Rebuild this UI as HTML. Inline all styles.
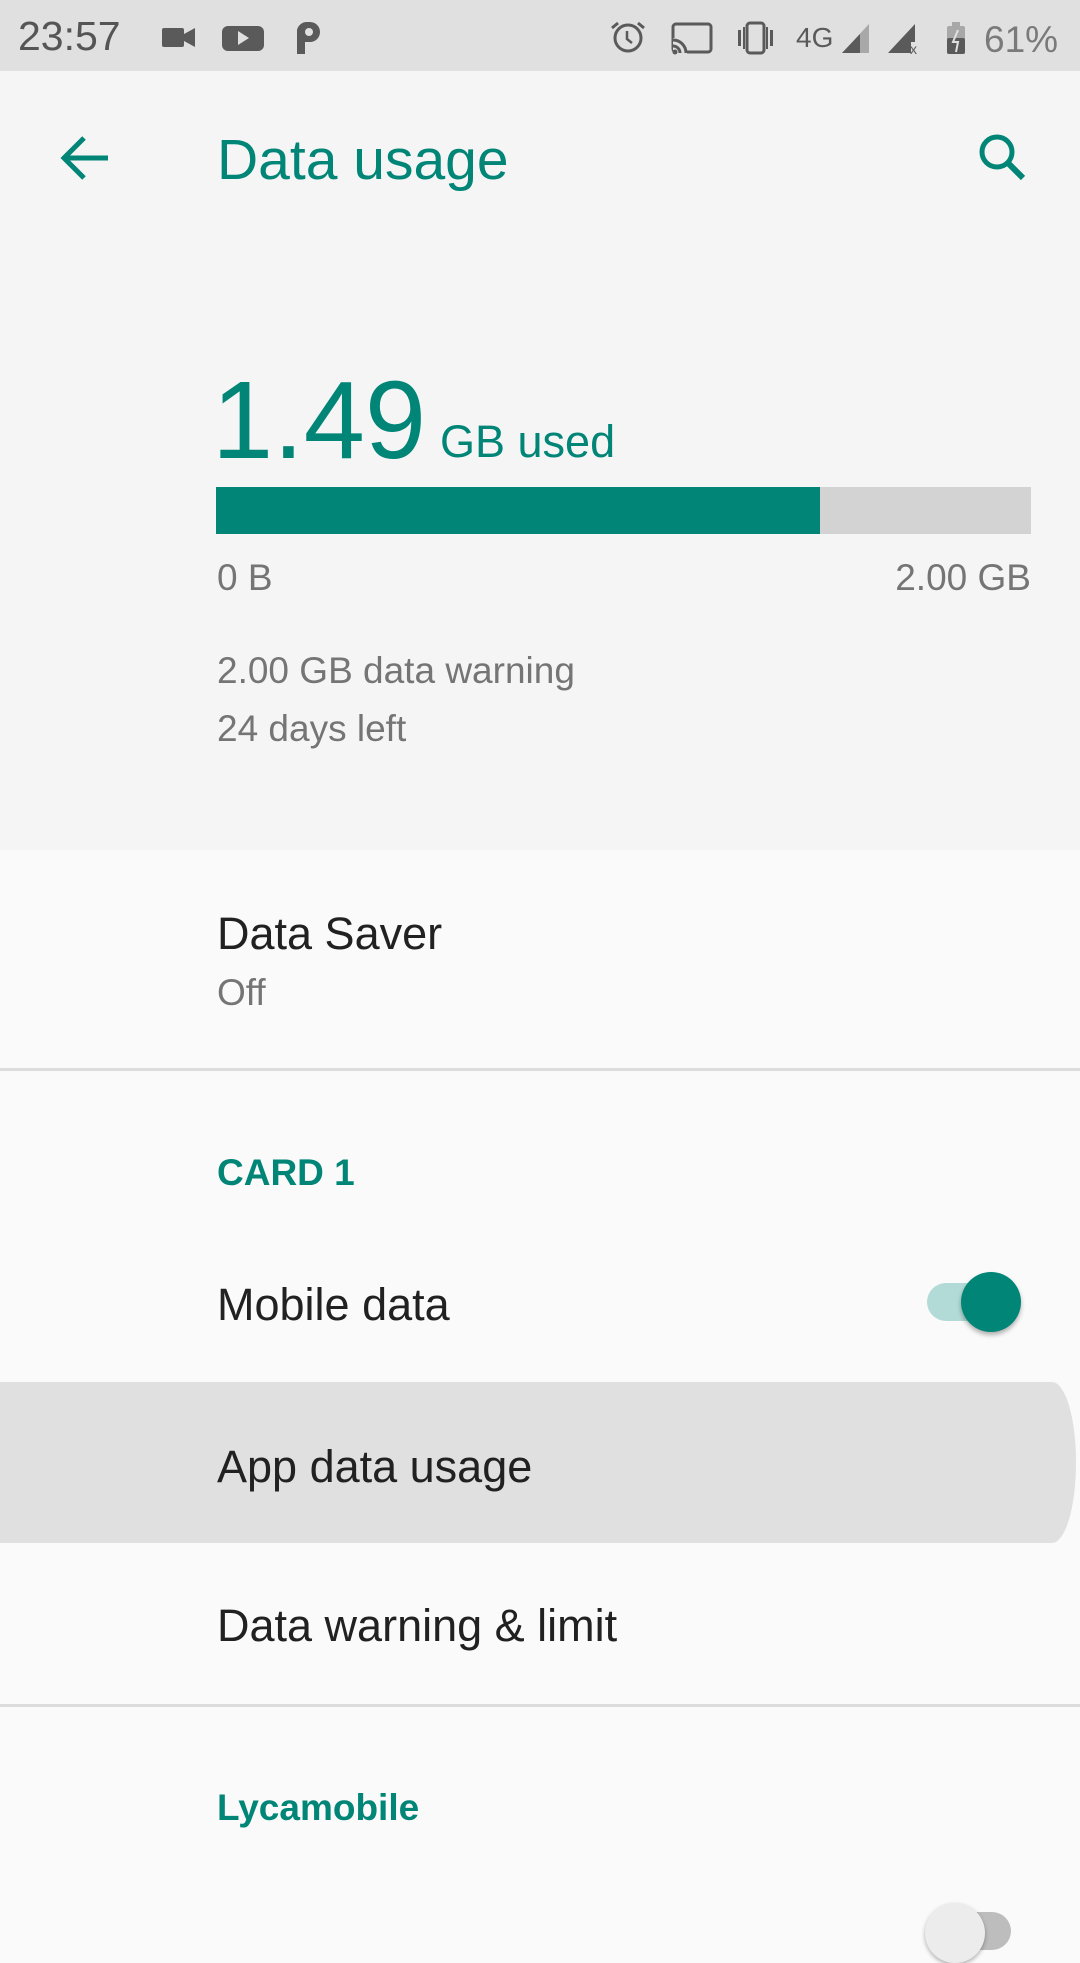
<!DOCTYPE html>
<html><head><meta charset="utf-8"><style>
*{margin:0;padding:0;box-sizing:border-box}
body{width:1080px;height:1920px;overflow:hidden;background:#fafafa;font-family:"Liberation Sans",sans-serif;position:relative}
.a{position:absolute;white-space:nowrap}
.t{color:#008577}
.p{color:#212121;font-size:45px;line-height:45px;left:217px}
.s{color:#757575;font-size:37px;line-height:37px}
</style></head><body>
<div class="a" style="left:0;top:0;width:1080px;height:71px;background:#e0e0e0"></div>
<div class="a" style="left:0;top:71px;width:1080px;height:779px;background:#f5f5f5"></div>
<div class="a" style="left:18px;top:16px;font-size:41px;line-height:41px;color:#555">23:57</div>
<svg class="a" style="left:160px;top:18px" width="900" height="40" viewBox="160 18 900 40">
 <g fill="#5a5a5a">
  <rect x="162" y="28" width="22" height="19" rx="2"/><path d="M184 34l11-6v19l-11-6z"/>
  <rect x="222" y="26" width="42" height="25" rx="6"/><path d="M238 31l11 7-11 7z" fill="#e0e0e0"/>
  <path d="M297 54V30a10 10 0 0 1 10-8h3a10 10 0 0 1 0 20h-5v12z"/><circle cx="309" cy="32" r="4" fill="#e0e0e0"/>
  <circle cx="628" cy="38" r="13" fill="none" stroke="#5a5a5a" stroke-width="3"/><path d="M627 31v8l5 4" stroke="#5a5a5a" stroke-width="2.5" fill="none"/>
  <path d="M612 28l6-5M644 28l-6-5" stroke="#5a5a5a" stroke-width="3"/>
  <rect x="673" y="24" width="38" height="28" rx="3" fill="none" stroke="#5a5a5a" stroke-width="3"/>
  <rect x="673" y="38" width="14" height="16" fill="#e0e0e0"/>
  <path d="M673 40a13 13 0 0 1 13 13M673 46a7 7 0 0 1 7 7" stroke="#5a5a5a" stroke-width="3" fill="none"/><circle cx="675" cy="52" r="2.5"/>
  <rect x="747" y="23" width="17" height="30" rx="3" fill="none" stroke="#5a5a5a" stroke-width="3"/>
  <rect x="738" y="30" width="3" height="16"/><rect x="770" y="30" width="3" height="16"/><rect x="743" y="27" width="2" height="22"/><rect x="766" y="27" width="2" height="22"/>
  <path d="M842 53L869 24V53z" fill="#a8a8a8"/><path d="M842 53L860 34V53z"/>
  <path d="M888 53L915 24V42h-4v11z"/>
  <rect x="947" y="26" width="18" height="28" rx="2" fill="#a8a8a8"/><rect x="952" y="22" width="8" height="5" fill="#a8a8a8"/><rect x="947" y="38" width="18" height="16" rx="2"/>
  <path d="M958 30l-5 12h5l-2 10" stroke="#e0e0e0" stroke-width="2" fill="none"/>
 </g>
 <text x="796" y="47" font-size="28" fill="#5a5a5a" font-family="Liberation Sans">4G</text>
 <text x="910" y="54" font-size="14" fill="#5a5a5a" font-family="Liberation Sans">x</text>
 <text x="984" y="52" font-size="37" fill="#7a7a7a" font-family="Liberation Sans">61%</text>
</svg>
<svg class="a" style="left:56px;top:128px" width="60" height="60" viewBox="0 0 60 60"><path d="M52 30H8M28 10L8 30l20 20" stroke="#008577" stroke-width="5" fill="none"/></svg>
<svg class="a" style="left:975px;top:130px" width="60" height="60" viewBox="0 0 60 60"><circle cx="22" cy="22" r="15" stroke="#008577" stroke-width="5" fill="none"/><path d="M33 33l15 15" stroke="#008577" stroke-width="6"/></svg>
<div class="a t" style="left:217px;top:132px;font-size:57px;line-height:57px">Data usage</div>
<div class="a t" style="left:212px;top:366px;font-size:110px;line-height:110px">1.49</div>
<div class="a t" style="left:440px;top:419px;font-size:45px;line-height:45px">GB used</div>
<div class="a" style="left:216px;top:487px;width:815px;height:47px;background:#d3d3d3"></div>
<div class="a" style="left:216px;top:487px;width:604px;height:47px;background:#018577"></div>
<div class="a s" style="left:217px;top:559px">0 B</div>
<div class="a s" style="right:49px;top:559px">2.00 GB</div>
<div class="a s" style="left:217px;top:652px">2.00 GB data warning</div>
<div class="a s" style="left:217px;top:710px">24 days left</div>
<div class="a p" style="top:911px">Data Saver</div>
<div class="a s" style="left:217px;top:974px">Off</div>
<div class="a" style="left:0;top:1068px;width:1080px;height:3px;background:#dcdcdc"></div>
<div class="a t" style="left:217px;top:1154px;font-size:37px;line-height:37px;font-weight:bold">CARD 1</div>
<div class="a p" style="top:1282px">Mobile data</div>
<div class="a" style="left:927px;top:1283px;width:84px;height:38px;border-radius:19px;background:#b2dad6"></div>
<div class="a" style="left:961px;top:1272px;width:60px;height:60px;border-radius:50%;background:#018577;box-shadow:0 3px 5px rgba(0,0,0,.3)"></div>
<div class="a" style="left:0;top:1382px;width:1076px;height:161px;background:#e0e0e0;border-radius:0 24px 24px 0/0 80px 80px 0"></div>
<div class="a p" style="top:1444px">App data usage</div>
<div class="a p" style="top:1603px">Data warning &amp; limit</div>
<div class="a" style="left:0;top:1704px;width:1080px;height:3px;background:#dcdcdc"></div>
<div class="a t" style="left:217px;top:1789px;font-size:37px;line-height:37px;font-weight:bold">Lycamobile</div>
<div class="a" style="left:927px;top:1912px;width:84px;height:38px;border-radius:19px;background:#bdbdbd"></div>
<div class="a" style="left:925px;top:1903px;width:60px;height:60px;border-radius:50%;background:#ececec;box-shadow:0 2px 4px rgba(0,0,0,.3)"></div>
</body></html>
